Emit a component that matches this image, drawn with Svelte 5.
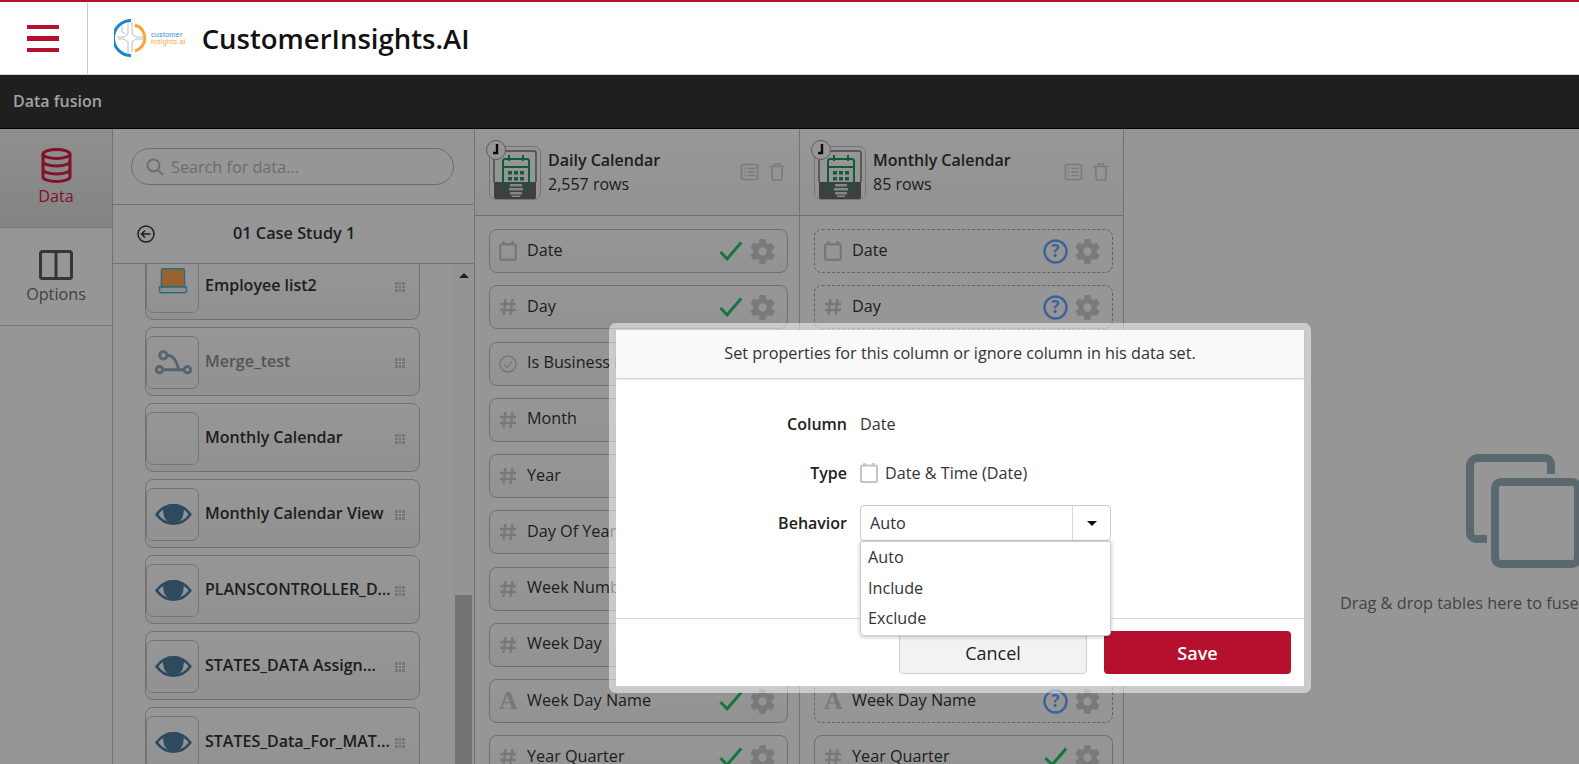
<script lang="ts">
	const gear =
		'M19.14 12.94c.04-.3.06-.61.06-.94 0-.32-.02-.64-.07-.94l2.03-1.58a.49.49 0 0 0 .12-.61l-1.92-3.32a.488.488 0 0 0-.59-.22l-2.39.96c-.5-.38-1.03-.7-1.62-.94l-.36-2.54a.484.484 0 0 0-.48-.41h-3.84c-.24 0-.43.17-.47.41l-.36 2.54c-.59.24-1.13.57-1.62.94l-2.39-.96c-.22-.08-.47 0-.59.22L2.74 8.87c-.12.21-.08.47.12.61l2.03 1.58c-.05.3-.09.63-.09.94s.02.64.07.94l-2.03 1.58a.49.49 0 0 0-.12.61l1.92 3.32c.12.22.37.29.59.22l2.39-.96c.5.38 1.03.7 1.62.94l.36 2.54c.05.24.24.41.48.41h3.84c.24 0 .44-.17.47-.41l.36-2.54c.59-.24 1.13-.56 1.62-.94l2.39.96c.22.08.47 0 .59-.22l1.92-3.32c.12-.22.07-.47-.12-.61l-2.01-1.58zM12 15.2c-1.77 0-3.2-1.43-3.2-3.2s1.43-3.2 3.2-3.2 3.2 1.43 3.2 3.2-1.43 3.2-3.2 3.2z';

	const tables = [
		{ name: 'Employee list2', icon: 'laptop' },
		{ name: 'Merge_test', icon: 'merge', dim: true },
		{ name: 'Monthly Calendar', icon: '' },
		{ name: 'Monthly Calendar View', icon: 'eye' },
		{ name: 'PLANSCONTROLLER_D…', icon: 'eye' },
		{ name: 'STATES_DATA Assign…', icon: 'eye' },
		{ name: 'STATES_Data_For_MAT…', icon: 'eye' }
	];

	const fields = [
		{ name: 'Date', type: 'date' },
		{ name: 'Day', type: 'num' },
		{ name: 'Is Business Day', type: 'bool' },
		{ name: 'Month', type: 'num' },
		{ name: 'Year', type: 'num' },
		{ name: 'Day Of Year', type: 'num' },
		{ name: 'Week Number', type: 'num' },
		{ name: 'Week Day', type: 'num' },
		{ name: 'Week Day Name', type: 'text' },
		{ name: 'Year Quarter', type: 'num' }
	];

	const columns = [
		{ title: 'Daily Calendar', rows: '2,557 rows', auto: false },
		{ title: 'Monthly Calendar', rows: '85 rows', auto: true }
	];
</script>

{#snippet typeIcon(type)}
	{#if type === 'date'}
		<svg class="type-icon" viewBox="0 0 18 20">
			<path d="M4.500 0v4M13.500 0v4" stroke="#c8c8c8" stroke-width="2.800" />
			<rect x="1.200" y="3.200" width="15.600" height="15.600" rx="1.500" fill="none" stroke="#c8c8c8" stroke-width="2.400" />
		</svg>
	{:else if type === 'num'}
		<svg class="type-icon" viewBox="0 0 18 20">
			<path d="M6.500 2 4.500 18M13.500 2l-2 16M1 7h16M1 13h16" fill="none" stroke="#c8c8c8" stroke-width="2.400" />
		</svg>
	{:else if type === 'bool'}
		<svg class="type-icon" viewBox="0 0 18 20">
			<circle cx="9" cy="10" r="8" fill="none" stroke="#c8c8c8" stroke-width="1.600" />
			<path d="M5 10.500l3 3 5-6" fill="none" stroke="#c8c8c8" stroke-width="1.600" />
		</svg>
	{:else}
		<span class="type-a">A</span>
	{/if}
{/snippet}

{#snippet tableIcon(icon)}
	{#if icon === 'laptop'}
		<svg viewBox="0 0 53 53" width="53" height="53">
			<rect x="15" y="8" width="24" height="19" rx="1.500" fill="#ffa64b" stroke="#46b0d5" stroke-width="1.500" />
			<path d="M13 27h28v4a2 2 0 0 1-2 2H15a2 2 0 0 1-2-2z" fill="#e6eef2" stroke="#46b0d5" stroke-width="1.500" />
		</svg>
	{:else if icon === 'merge'}
		<svg viewBox="0 0 53 53" width="53" height="53" fill="none" stroke="#8ea8b9" stroke-width="3">
			<circle cx="17" cy="19" r="3.800" />
			<circle cx="13" cy="34" r="3.400" />
			<circle cx="42" cy="34" r="3.400" />
			<path d="M16.500 34h22M21 19c6 0 9 4 12 15" />
		</svg>
	{:else if icon === 'eye'}
		<svg viewBox="0 0 53 53" width="53" height="53">
			<path d="M10 26.500C15 19.500 21 17 27.500 17s12.500 2.500 17.500 9.500c-5 7-11 9.500-17.500 9.500S15 33.500 10 26.500z" fill="none" stroke="#4b7c9d" stroke-width="2.800" />
			<path d="M17.500 19a16 16 0 0 1 20 0c.8 2 1 4 .5 6a10.500 10.500 0 0 1-21 0c-.5-2-.3-4 .5-6z" fill="#4b7c9d" />
		</svg>
	{/if}
{/snippet}

<div class="app">
	<header class="topbar">
		<button class="burger" aria-label="Menu"><span></span><span></span><span></span></button>
		<div class="brand">
			<svg class="logo-mark" viewBox="0 0 34 38" width="34" height="38" fill="none">
				<path d="M17 1.500A17 17 0 0 0 17 36.500" stroke="#1f86c8" stroke-width="3" />
				<path d="M21 6a13.500 13.500 0 0 1 0 26" stroke="#f6a632" stroke-width="3" />
				<circle cx="22" cy="7" r="1.500" fill="#f6a632" />
				<path d="M14 3v12l-4 3H3M18 3v12l4 3h7M14 35V23l-4-3H4M18 33V23l4-3h7M8 7v6l3 2" stroke="#b4bec6" stroke-width="1" />
			</svg>
			<div class="logo-text"><span class="logo-blue">customer</span><span class="logo-orange">insights.ai</span></div>
		</div>
		<h1>CustomerInsights.AI</h1>
	</header>
	<div class="pagebar">Data fusion</div>

	<main class="workspace">
		<nav class="rail">
			<div class="rail-tab active">
				<svg viewBox="0 0 31 35" width="31" height="35" fill="none" stroke="#d81c45" stroke-width="3">
					<ellipse cx="15.500" cy="6" rx="13.500" ry="4.500" />
					<path d="M2 6v23c0 2.500 6 4.500 13.500 4.500S29 31.500 29 29V6M2 13.500c0 2.500 6 4.500 13.500 4.500S29 16 29 13.500M2 21.500c0 2.500 6 4.500 13.500 4.500S29 24 29 21.500" />
				</svg>
				<span>Data</span>
			</div>
			<div class="rail-tab">
				<svg viewBox="0 0 34 30" width="34" height="30" fill="none" stroke="#5a5a5a" stroke-width="3">
					<rect x="1.500" y="1.500" width="31" height="27" rx="2" />
					<path d="M17 1.500v27" />
				</svg>
				<span>Options</span>
			</div>
		</nav>

		<section class="sidebar">
			<div class="search-wrap">
				<div class="search">
					<svg viewBox="0 0 18 18" width="18" height="18" fill="none" stroke="#b4b4b4" stroke-width="1.800">
						<circle cx="7.500" cy="7.500" r="6" />
						<path d="M12 12l5 5" />
					</svg>
					<span>Search for data...</span>
				</div>
			</div>
			<div class="crumb">
				<svg viewBox="0 0 18 18" width="18" height="18" fill="none" stroke="#333" stroke-width="1.500">
					<circle cx="9" cy="9" r="8" />
					<path d="M13.500 9h-9M8 5.500 4.500 9 8 12.500" />
				</svg>
				<span>01 Case Study 1</span>
			</div>
			<div class="list-area">
				<div class="table-list">
					{#each tables as t}
						<div class="table-item">
							<div class="table-thumb">{@render tableIcon(t.icon)}</div>
							<span class="table-name" class:dim={t.dim}>{t.name}</span>
							<div class="grip">
								{#each Array(9) as _}<i></i>{/each}
							</div>
						</div>
					{/each}
				</div>
				<div class="scrollbar">
					<span class="scroll-up"></span>
					<span class="scroll-thumb"></span>
				</div>
			</div>
		</section>

		{#each columns as col}
			<section class="column" class:auto={col.auto}>
				<div class="col-head">
					<div class="col-thumb">
						<svg viewBox="0 0 52 54" width="52" height="54">
							<path d="M5 36h42v15a2 2 0 0 1-2 2H7a2 2 0 0 1-2-2z" fill="#696969" />
							<path d="M5 36V7a2 2 0 0 1 2-2h38a2 2 0 0 1 2 2v29" fill="none" stroke="#777" stroke-width="1.500" />
							<rect x="14" y="13" width="26" height="29" rx="2" fill="none" stroke="#19995a" stroke-width="2" />
							<path d="M14 21h26M20 9v6M34 9v6" stroke="#19995a" stroke-width="2" />
							<path d="M19 25h4v3.500h-4zM25 25h4v3.500h-4zM31 25h4v3.500h-4zM19 31h4v3.500h-4zM25 31h4v3.500h-4zM31 31h4v3.500h-4z" fill="#19995a" />
							<path d="M21 38h12v2.500H21zM20 42h14v2.500H20zM21 46h12v2.500H21zM23 49.500h8v1.500h-8z" fill="#e0e0e0" />
						</svg>
						<span class="clock">
							<svg viewBox="0 0 18 18" width="18" height="18">
								<path d="M10 3v9H6" fill="none" stroke="#111" stroke-width="2.400" />
							</svg>
						</span>
					</div>
					<div class="col-title">
						<strong>{col.title}</strong>
						<span>{col.rows}</span>
					</div>
					<div class="col-actions">
						<svg viewBox="0 0 18 18" width="19" height="18" fill="none" stroke="#cdcdcd" stroke-width="1.700">
							<rect x="1" y="1.500" width="16" height="15" rx="1.500" />
							<path d="M3.500 5.500h1.500M3.500 9h1.500M3.500 12.500h1.500M7 5.500h7.500M7 9h7.500M7 12.500h7.500" />
						</svg>
						<svg viewBox="0 0 16 18" width="16" height="18" fill="none" stroke="#cdcdcd" stroke-width="1.700">
							<path d="M.5 3.500h15M5.500 3.500V1h5v2.500M2.500 3.500l1 13.500h9l1-13.500" />
						</svg>
					</div>
				</div>
				<div class="fields">
					{#each fields as f}
						<div class="field" class:pending={col.auto && f.name !== 'Year Quarter'}>
							{@render typeIcon(f.type)}
							<span class="field-name">{f.name}</span>
							{#if col.auto && f.name !== 'Year Quarter'}
								<svg class="status" viewBox="0 0 24 24" width="27" height="27" fill="none">
									<circle cx="12" cy="12" r="9.800" stroke="#66a6ff" stroke-width="2.200" />
									<text x="12" y="17" text-anchor="middle" class="qmark">?</text>
								</svg>
							{:else}
								<svg class="status" viewBox="0 0 24 24" width="27" height="27" fill="none">
									<path d="M3 12.500 9 18.500 21.500 4" stroke="#22c565" stroke-width="2.600" />
								</svg>
							{/if}
							<svg class="cog" viewBox="0 0 24 24" width="31" height="31"><path d={gear} fill="#cbcbcb" /></svg>
						</div>
					{/each}
				</div>
			</section>
		{/each}

		<section class="canvas">
			<svg viewBox="0 0 117 114" width="117" height="114" fill="none" stroke="#96adbb" stroke-width="8">
				<path d="M21 85H10a6 6 0 0 1-6-6V12a8 8 0 0 1 8-8h67a6 6 0 0 1 6 6v10" />
				<rect x="29" y="28" width="83" height="82" rx="6" />
			</svg>
			<p>Drag &amp; drop tables here to fuse</p>
		</section>

		<div class="backdrop"></div>

		<div class="modal">
			<div class="modal-inner">
				<div class="modal-head">Set properties for this column or ignore column in his data set.</div>
				<div class="modal-body">
					<div class="form">
						<span class="form-label">Column</span>
						<div class="value">Date</div>
						<span class="form-label">Type</span>
						<div class="value">
							<svg viewBox="0 0 18 20" width="18" height="20" fill="none" stroke="#c4c4c4">
								<path d="M4.500 0v3M13.500 0v3" stroke-width="2.400" />
								<rect x="1" y="2.500" width="16" height="16.500" rx="1.500" stroke-width="2" />
							</svg>
							Date &amp; Time (Date)
						</div>
						<span class="form-label last">Behavior</span>
						<div class="select-wrap">
							<div class="select">
								<span>Auto</span>
								<span class="select-arrow"></span>
							</div>
							<ul class="options">
								<li>Auto</li>
								<li>Include</li>
								<li>Exclude</li>
							</ul>
						</div>
					</div>
				</div>
				<div class="modal-foot">
					<button class="btn cancel">Cancel</button>
					<button class="btn save">Save</button>
				</div>
			</div>
		</div>
	</main>
</div>

<style>
	:global(body) {
		margin: 0;
		font-family: 'Open Sans', 'Liberation Sans', sans-serif;
		overflow: hidden;
	}

	.app {
		width: 1579px;
		height: 764px;
		display: flex;
		flex-direction: column;
		overflow: hidden;
		color: #333;
		font-size: 16.200px;
	}

	/* header */
	.topbar {
		height: 72px;
		flex: none;
		display: flex;
		align-items: center;
		border-top: 2px solid #b5112f;
		border-bottom: 1px solid #d4d4d4;
		background: #fff;
	}

	.burger {
		width: 88px;
		height: 71px;
		margin-top: 1px;
		flex: none;
		padding: 0 28px 0 27px;
		display: flex;
		flex-direction: column;
		justify-content: center;
		gap: 7px;
		background: none;
		border: 0;
		border-right: 1px solid #ccc;
		box-sizing: border-box;
	}

	.burger span {
		height: 4.500px;
		background: #b5112f;
	}

	.brand {
		display: flex;
		align-items: center;
		gap: 3px;
		margin-left: 26px;
	}

	.logo-text {
		display: flex;
		flex-direction: column;
		font-size: 7.300px;
		line-height: 7px;
		letter-spacing: 0.2px;
		font-family: 'Liberation Sans', sans-serif;
	}

	.logo-blue {
		color: #2e93d1;
	}

	.logo-orange {
		color: #f4a93d;
	}

	h1 {
		margin: 0 0 0 16px;
		font-size: 27.500px;
		font-weight: 600;
		color: #111;
	}

	.pagebar {
		height: 54px;
		flex: none;
		display: flex;
		align-items: center;
		padding: 0 0 2px 13px;
		box-sizing: border-box;
		font-size: 16px;
		font-weight: 600;
		color: #a3a3a3;
		background: #1f1f1f;
		border-bottom: 1px solid #000;
	}

	/* workspace */
	.workspace {
		flex: 1;
		min-height: 0;
		display: flex;
		position: relative;
		background: #fbfbfb;
	}

	.rail {
		width: 113px;
		flex: none;
		box-sizing: border-box;
		border-right: 1px solid #c0c0c0;
		background: #fbfbfb;
	}

	.rail-tab {
		height: 98px;
		display: flex;
		flex-direction: column;
		align-items: center;
		padding-top: 22px;
		box-sizing: border-box;
		gap: 3px;
		border-bottom: 1px solid #c4c4c4;
		color: #6e6e6e;
	}

	.rail-tab.active {
		height: 99px;
		padding-top: 19px;
		gap: 2px;
		background: linear-gradient(#eee, #dcdcdc);
		color: #d81c45;
	}

	.sidebar {
		width: 362px;
		flex: none;
		box-sizing: border-box;
		display: flex;
		flex-direction: column;
		border-right: 1px solid #c0c0c0;
	}

	.search-wrap {
		height: 76px;
		flex: none;
		padding: 19px 20px 0 18px;
		box-sizing: border-box;
		border-bottom: 1px solid #c0c0c0;
	}

	.search {
		height: 37px;
		display: flex;
		align-items: center;
		gap: 7px;
		padding-left: 14px;
		border: 1px solid #b4b4b4;
		border-radius: 19px;
		box-sizing: border-box;
		color: #b4b4b4;
	}

	.crumb {
		height: 59px;
		flex: none;
		display: flex;
		align-items: center;
		padding-left: 24px;
		border-bottom: 1px solid #c0c0c0;
		box-sizing: border-box;
	}

	.crumb span {
		margin-left: 78px;
		padding-bottom: 2px;
		font-size: 16.300px;
		font-weight: 600;
	}

	.list-area {
		flex: 1;
		min-height: 0;
		display: flex;
		overflow: hidden;
	}

	.table-list {
		flex: 1;
		display: flex;
		flex-direction: column;
		gap: 7px;
		margin-top: -13px;
		padding: 0 0 0 32px;
	}

	.table-item {
		width: 275px;
		height: 69px;
		flex: none;
		display: flex;
		align-items: center;
		position: relative;
		box-sizing: border-box;
		border: 1px solid #bcbcbc;
		border-radius: 8px;
		background: linear-gradient(#fcfcfc, #f2f2f2);
	}

	.table-thumb {
		width: 53px;
		height: 53px;
		flex: none;
		border: 1px solid #c2c2c2;
		border-radius: 7px;
		box-sizing: border-box;
		margin-top: 1px;
		display: flex;
		align-items: center;
		justify-content: center;
	}

	.table-name {
		margin-left: 6px;
		padding-bottom: 2px;
		font-size: 16px;
		font-weight: 600;
		white-space: nowrap;
	}

	.table-name.dim {
		color: #8c8c8c;
	}

	.grip {
		width: 10px;
		position: absolute;
		right: 14px;
		top: 30px;
		display: grid;
		grid-template-columns: repeat(3, 2.500px);
		gap: 1.200px;
	}

	.grip i {
		height: 2.500px;
		background: #c4c4c4;
	}

	.scrollbar {
		width: 21px;
		flex: none;
		display: flex;
		flex-direction: column;
		align-items: center;
		position: relative;
		background: #f7f7f7;
	}

	.scroll-up {
		margin-top: 9px;
		border: 5px solid transparent;
		border-top: 0;
		border-bottom: 5px solid #333;
	}

	.scroll-thumb {
		position: absolute;
		top: 331px;
		bottom: 0;
		width: 17px;
		background: #c0c0c0;
	}

	.column {
		width: 325px;
		flex: none;
		box-sizing: border-box;
		border-right: 1px solid #c0c0c0;
		display: flex;
		flex-direction: column;
		overflow: hidden;
	}

	.column.auto {
		width: 324px;
	}

	.col-head {
		height: 87px;
		flex: none;
		display: flex;
		align-items: center;
		padding: 0 7px 0 14px;
		box-sizing: border-box;
		border-bottom: 1px solid #bcbcbc;
		background: linear-gradient(#fdfdfd, #f4f4f4);
	}

	.col-thumb {
		width: 52px;
		height: 54px;
		flex: none;
		border: 1px solid #c2c2c2;
		border-radius: 7px;
		box-sizing: border-box;
		position: relative;
		margin-top: 1px;
	}

	.col-thumb > svg {
		position: absolute;
		left: -1px;
		top: -1px;
	}

	.clock {
		position: absolute;
		left: -4px;
		top: -7px;
		width: 18px;
		height: 18px;
		border: 1px solid #999;
		border-radius: 50%;
		background: #fafafa;
		display: flex;
	}

	.col-title {
		display: flex;
		flex-direction: column;
		margin-left: 7px;
		margin-bottom: 1px;
		flex: 1;
		line-height: 24px;
		font-size: 16px;
	}

	.col-title strong {
		font-weight: 600;
	}

	.col-actions {
		display: flex;
		gap: 10px;
		align-items: center;
		margin-right: 7px;
	}

	.fields {
		display: flex;
		flex-direction: column;
		gap: 12.250px;
		padding: 13px 11px 0 14px;
	}

	.column.auto .fields {
		padding-right: 10px;
	}

	.field {
		height: 44px;
		flex: none;
		display: flex;
		align-items: center;
		padding: 0 9px;
		box-sizing: border-box;
		border: 1px solid #b8b8b8;
		border-radius: 8px;
		background: linear-gradient(#fbfbfb, #f4f4f4);
	}

	.field.pending {
		border: 1px dashed #a4a4a4;
		background: none;
	}

	.type-icon {
		width: 18px;
		height: 20px;
		flex: none;
	}

	.type-a {
		width: 18px;
		flex: none;
		font-family: 'Liberation Serif', serif;
		font-weight: 700;
		font-size: 26px;
		color: #c8c8c8;
		text-align: center;
		line-height: 20px;
	}

	.field-name {
		margin-left: 10px;
		padding-bottom: 3px;
		flex: 1;
		white-space: nowrap;
	}

	.status {
		flex: none;
	}

	.qmark {
		font-family: 'Open Sans', sans-serif;
		font-size: 15px;
		font-weight: 700;
		fill: #66a6ff;
	}

	.cog {
		flex: none;
		margin-left: 3px;
	}

	.canvas {
		flex: 1;
		min-width: 0;
		overflow: hidden;
		padding: 325px 0 0 342px;
		color: #707070;
		white-space: nowrap;
	}

	.canvas svg {
		display: block;
	}

	.canvas p {
		margin: 24px 0 0 -126px;
		font-size: 16.300px;
		line-height: 22px;
	}

	/* dialog */
	.backdrop {
		position: absolute;
		inset: 0;
		background: rgba(0, 0, 0, 0.4);
	}

	.modal {
		position: absolute;
		left: 609px;
		top: 194px;
		width: 702px;
		padding: 7px;
		box-sizing: border-box;
		border-radius: 7px;
		background: rgba(255, 255, 255, 0.5);
	}

	.modal-inner {
		background: #fff;
		display: flex;
		flex-direction: column;
		height: 356px;
	}

	.modal-head {
		height: 49px;
		flex: none;
		display: flex;
		align-items: center;
		justify-content: center;
		background: #f9f9f9;
		border-bottom: 1px solid #d4d4d4;
		box-sizing: border-box;
		box-shadow: 0 1px 2px rgba(0, 0, 0, 0.08);
		padding-bottom: 2px;
	}

	.modal-body {
		flex: 1;
		padding-top: 20px;
		box-sizing: border-box;
	}

	.form {
		display: grid;
		grid-template-columns: 231px 251px;
		column-gap: 13px;
		align-items: center;
	}

	.form-label {
		text-align: right;
		font-size: 16px;
		font-weight: 600;
		color: #222;
	}

	.form-label.last {
		margin-top: 8px;
	}

	.value {
		height: 49px;
		display: flex;
		align-items: center;
		gap: 7px;
	}

	.select-wrap {
		position: relative;
		height: 36px;
		margin-top: 8px;
	}

	.select {
		height: 36px;
		display: flex;
		align-items: center;
		justify-content: space-between;
		box-sizing: border-box;
		border: 1px solid #ccc;
		border-radius: 4px;
		padding-left: 9px;
	}

	.select-arrow {
		width: 38px;
		height: 34px;
		border-left: 1px solid #d8d8d8;
		box-sizing: border-box;
		position: relative;
	}

	.select-arrow::after {
		content: '';
		position: absolute;
		left: 14px;
		top: 15px;
		border: 5px solid transparent;
		border-bottom: 0;
		border-top: 5px solid #111;
	}

	.options {
		position: absolute;
		left: 0;
		right: 0;
		top: 36px;
		margin: 0;
		padding: 0 0 1px;
		list-style: none;
		background: #fff;
		border: 1px solid #d0d0d0;
		border-radius: 0 0 4px 4px;
		box-shadow: 0 1px 4px rgba(0, 0, 0, 0.25);
		z-index: 2;
	}

	.options li {
		height: 30.500px;
		display: flex;
		align-items: center;
		padding-left: 7px;
	}

	.modal-foot {
		height: 68px;
		flex: none;
		display: flex;
		justify-content: flex-end;
		gap: 17px;
		padding: 12px 13px 0 0;
		box-sizing: border-box;
		border-top: 1px solid #d8d8d8;
	}

	.btn {
		height: 43px;
		font-family: inherit;
		font-size: 18px;
		border-radius: 4px;
		box-sizing: border-box;
	}

	.cancel {
		width: 188px;
		background: #f2f2f2;
		border: 1px solid #cfcfcf;
		color: #222;
	}

	.save {
		width: 187px;
		background: #b5112f;
		border: 0;
		color: #fff;
		font-weight: 600;
	}
</style>
